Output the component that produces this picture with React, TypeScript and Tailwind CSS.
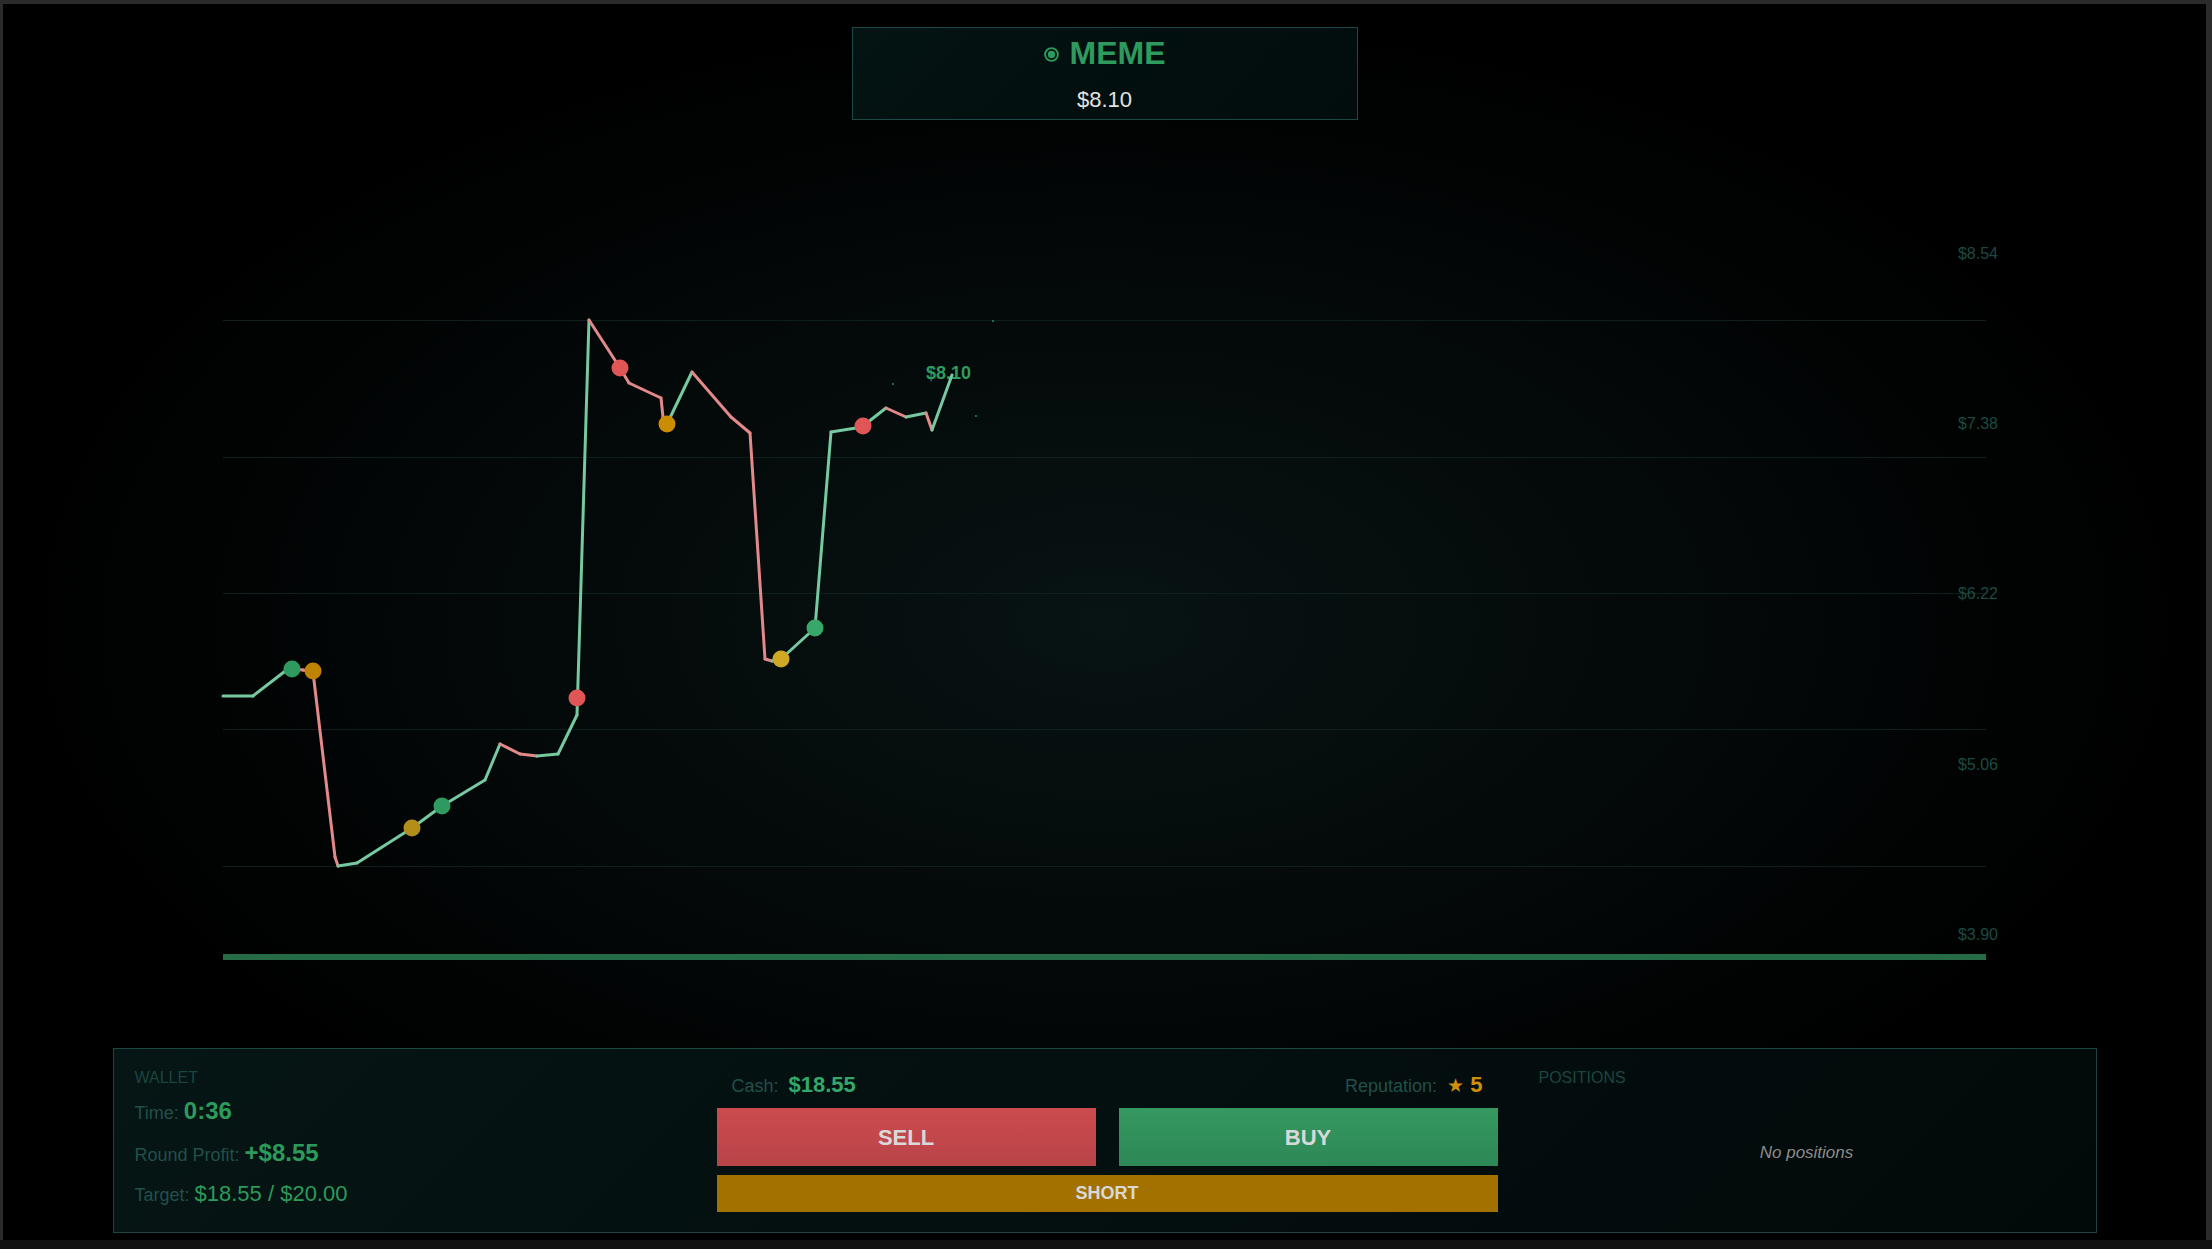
import React from "react";

const pts: [number, number][] = [
  [223, 696], [253, 696], [284, 672], [292, 669], [303, 670], [313, 672], [335, 857], [338, 866],
  [357, 863], [412, 828], [442, 806], [485, 780], [500, 744], [520, 754], [537, 756], [558, 754],
  [577, 715], [589, 320], [620, 368], [629, 383], [661, 398], [663, 417], [667, 424], [692, 372],
  [731, 417], [750, 433], [765, 659], [772, 661], [781, 659], [815, 628], [831, 432], [856, 428],
  [863, 426], [886, 408], [906, 417], [926, 413], [932, 430], [952, 375],
];

const dots: [number, number, string][] = [
  [292, 669, "#2f9a60"],
  [313, 671, "#c08300"],
  [412, 828, "#b38e1a"],
  [442, 806, "#2f9a60"],
  [577, 698, "#e05555"],
  [620, 368, "#e05555"],
  [667, 424, "#cc8c00"],
  [781, 659, "#d1a824"],
  [815, 628, "#38a86a"],
  [863, 426, "#e05555"],
];

const gridYs = [320, 457, 593, 729, 866];
const labels: [string, number][] = [
  ["$8.54", 258.7],
  ["$7.38", 428.7],
  ["$6.22", 598.7],
  ["$5.06", 769.7],
  ["$3.90", 939.7],
];

function Chart() {
  return (
    <svg width={2203} height={928} viewBox="0 0 2203 928" className="block shrink-0">
      <g transform="translate(-3,-120)" fontFamily="'Liberation Sans', Arial, sans-serif">
        {gridYs.map((y) => (
          <line key={y} x1={223} x2={1986} y1={y + 0.5} y2={y + 0.5} stroke="#0d201d" strokeWidth={1} />
        ))}
        {labels.map(([t, y]) => (
          <text key={t} x={1998} y={y} textAnchor="end" fontSize={16} fill="#1c4a43">
            {t}
          </text>
        ))}
        <rect x={223} y={954} width={1763} height={6} fill="#246b46" />
        <text x={926} y={379} fontSize={18} fontWeight={700} fill="#2f9d5f">
          $8.10
        </text>
        {pts.slice(1).map((p, i) => {
          const a = pts[i];
          const down = p[1] > a[1];
          return (
            <line
              key={i}
              x1={a[0]}
              y1={a[1]}
              x2={p[0]}
              y2={p[1]}
              stroke={down ? "#e3898a" : "#76c9a0"}
              strokeWidth={3}
              strokeLinecap="round"
            />
          );
        })}
        {dots.map(([x, y, c], i) => (
          <circle key={i} cx={x} cy={y} r={8.5} fill={c} />
        ))}
        <rect x={892} y={383} width={2} height={2} fill="#1f6f45" />
        <rect x={975} y={415} width={2} height={2} fill="#1f6f45" />
        <rect x={992} y={320} width={2} height={2} fill="#1f6f45" />
      </g>
    </svg>
  );
}

export default function App() {
  return (
    <div className="w-[2212px] h-[1249px] bg-[#2b2b2b] flex flex-col overflow-hidden font-['Liberation_Sans',Arial,sans-serif]">
      <div className="h-[1240px] flex pt-[4px] pl-[3px] pr-[6px]">
        <div className="flex-1 flex flex-col items-center bg-[radial-gradient(ellipse_at_center,#081313_0%,#000_70%)]">
          {/* top ticker card */}
          <div className="mt-[23px] w-[506px] h-[93px] border border-[#1b4a46] bg-[linear-gradient(135deg,#041313,#020c0c)] flex flex-col items-center pt-[7px]">
            <div className="flex items-center gap-[11px] leading-[36px]">
              <svg width="15" height="15" viewBox="0 0 15 15" className="mt-[3px]">
                <circle cx="7.5" cy="7.5" r="6.4" fill="none" stroke="#2e9a5d" strokeWidth="1.9" />
                <circle cx="7.5" cy="7.5" r="3.7" fill="#2e9a5d" />
              </svg>
              <span className="text-[32px] font-bold text-[#2e9a5d]">MEME</span>
            </div>
            <div className="mt-[16px] leading-[26px] text-[22px] text-[#e2e2e2]">$8.10</div>
          </div>

          <Chart />

          {/* bottom panel */}
          <div className="w-[1984px] h-[185px] border border-[#1a4741] bg-[linear-gradient(135deg,#061515,#020909)] px-[21px] pt-[21px] grid grid-cols-[541px_781px_1fr] gap-x-[41px]">
            {/* wallet */}
            <div className="flex flex-col">
              <div className="text-[16px] leading-none uppercase text-[#1b463f]">Wallet</div>
              <div className="mt-[13px] flex items-baseline text-[18px] leading-none text-[#21504a]">
                <span>Time:</span>
                <span className="ml-[5px] text-[24px] font-bold text-[#2c9a5b]">0:36</span>
              </div>
              <div className="mt-[18px] flex items-baseline text-[18px] leading-none text-[#21504a]">
                <span>Round Profit:</span>
                <span className="ml-[5px] text-[24px] font-bold text-[#2c9a5b]">+$8.55</span>
              </div>
              <div className="mt-[18px] flex items-baseline text-[18px] leading-none text-[#21504a]">
                <span>Target:</span>
                <span className="ml-[5px] text-[22px] text-[#2c9a5b]">$18.55 / $20.00</span>
              </div>
            </div>

            {/* actions */}
            <div className="flex flex-col">
              <div className="mt-[4px] px-[15px] flex items-baseline justify-between leading-none">
                <div className="flex items-baseline">
                  <span className="text-[18px] text-[#21504a]">Cash:</span>
                  <span className="ml-[10px] text-[22px] font-bold text-[#33a86a]">$18.55</span>
                </div>
                <div className="flex items-baseline">
                  <span className="text-[18px] text-[#21504a]">Reputation:</span>
                  <span className="ml-[10px] text-[22px] font-bold text-[#d08f0a]">
                    <span className="font-['DejaVu_Sans',sans-serif] font-normal text-[19px]">★</span> 5
                  </span>
                </div>
              </div>
              <div className="mt-[12px] flex gap-[23px]">
                <button className="flex-1 h-[58px] bg-[linear-gradient(180deg,#cc4b4e,#b84448)] text-[#d9d9d9] text-[22px] font-bold">
                  SELL
                </button>
                <button className="flex-1 h-[58px] bg-[linear-gradient(180deg,#35985f,#2d8856)] text-[#d9d9d9] text-[22px] font-bold">
                  BUY
                </button>
              </div>
              <button className="mt-[9px] h-[37px] w-full bg-[#a27100] text-[#d9d9d9] text-[18px] font-bold">
                SHORT
              </button>
            </div>

            {/* positions */}
            <div className="flex flex-col">
              <div className="text-[16px] leading-none uppercase text-[#1b463f]">Positions</div>
              <div className="mt-[58px] text-center text-[17px] leading-none italic text-[#8c8c8c]">No positions</div>
            </div>
          </div>
        </div>
      </div>
      <div className="h-[9px] bg-[#121212]" />
    </div>
  );
}
